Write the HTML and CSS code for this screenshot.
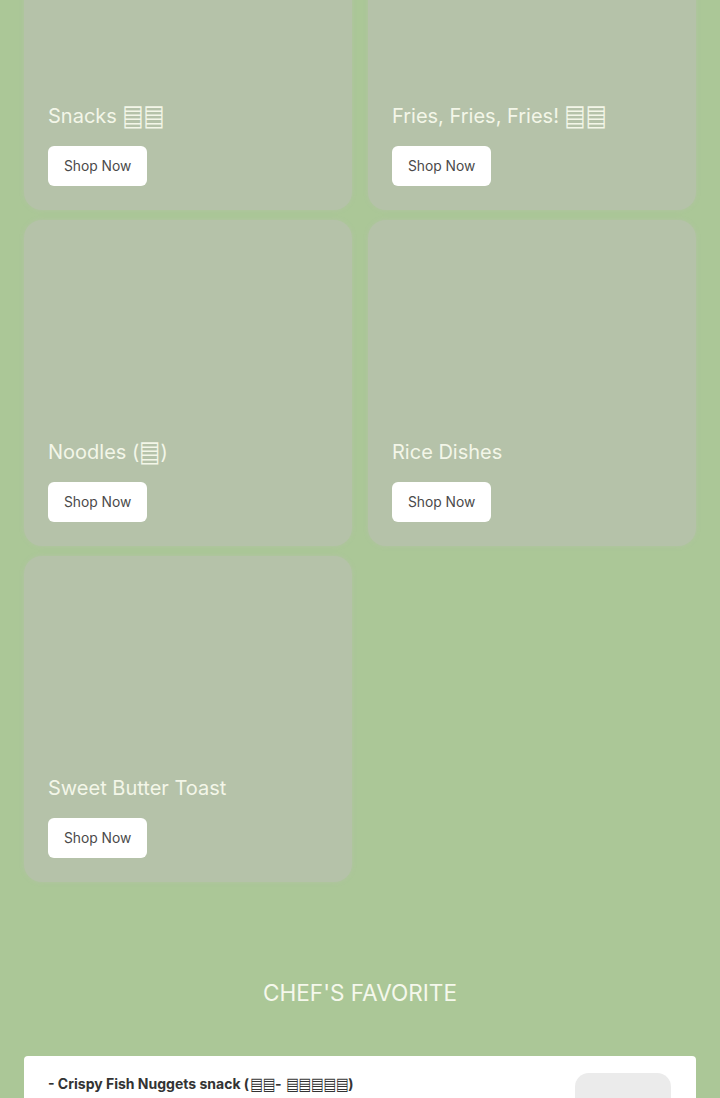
FILE: index.html
```html
<!DOCTYPE html>
<html lang="en">
<head>
  <meta charset="UTF-8">
  <title>Menu</title>
  <link rel="stylesheet" href="styles.css">
</head>
<body>
  <section class="category-grid">
    <div class="category-card">
      <h2>Snacks <span class="tofu">▤▤</span></h2>
      <button>Shop Now</button>
    </div>
    <div class="category-card">
      <h2>Fries, Fries, Fries! <span class="tofu">▤▤</span></h2>
      <button>Shop Now</button>
    </div>
    <div class="category-card">
      <h2>Noodles (<span class="tofu">▤</span>)</h2>
      <button>Shop Now</button>
    </div>
    <div class="category-card">
      <h2>Rice Dishes</h2>
      <button>Shop Now</button>
    </div>
    <div class="category-card">
      <h2>Sweet Butter Toast</h2>
      <button>Shop Now</button>
    </div>
  </section>

  <section class="favorites">
    <h2>CHEF'S FAVORITE</h2>
    <div class="fav-item">
      <p>- Crispy Fish Nuggets snack (<span class="tofu">▤▤</span>- <span class="tofu">▤▤▤▤▤</span>)</p>
      <div class="fav-thumb"></div>
    </div>
  </section>
</body>
</html>
```

FILE: styles.css
```css
body {
  margin: 0;
  background: #abc797;
  font-family: Inter, "Noto Sans", sans-serif;
}

/* missing-glyph boxes from the original render */
.tofu {
  display: inline-block;
  font-family: "DejaVu Sans", sans-serif;
  font-size: 1.12em;
  font-weight: 700;
  line-height: 1;
  transform: scaleY(1.3);
  transform-origin: 50% 60%;
}

.category-grid {
  display: grid;
  grid-template-columns: 1fr 1fr;
  column-gap: 16px;
  row-gap: 10px;
  padding: 0 24px;
  margin-top: -116px;
}

.category-card {
  height: 326px;
  box-sizing: border-box;
  background: #b5c2a9;
  border-radius: 18px;
  box-shadow: 0 0 4px rgba(181, 194, 169, 0.8);
  padding: 24px;
  display: flex;
  flex-direction: column;
  justify-content: flex-end;
  align-items: flex-start;
}

.category-card h2 {
  margin: 0 0 16px;
  font-size: 20px;
  font-weight: 400;
  line-height: 28px;
  color: #f3f6e8;
}

.category-card button {
  height: 40px;
  padding: 0 16px;
  background: #fff;
  color: #4a4a4a;
  border: none;
  border-radius: 6px;
  font-family: inherit;
  font-size: 13.8px;
  cursor: pointer;
}

.favorites {
  padding: 95px 24px 0;
}

.favorites h2 {
  margin: 0 0 47px;
  text-align: center;
  font-size: 22.6px;
  font-weight: 400;
  line-height: 32px;
  color: #f5f8ec;
}

.fav-item {
  background: #fff;
  border-radius: 4px;
  padding: 17px 25px 24px 24px;
  display: flex;
  justify-content: space-between;
  align-items: flex-start;
}

.fav-item p {
  margin: 0;
  padding-top: 1px;
  font-size: 14px;
  font-weight: 700;
  line-height: 20px;
  color: #333;
}

.fav-item .tofu {
  font-size: 0.98em;
  letter-spacing: -0.5px;
  margin-left: 1px;
}

.fav-thumb {
  width: 96px;
  height: 96px;
  background: #ebebeb;
  border-radius: 14px;
}
```
